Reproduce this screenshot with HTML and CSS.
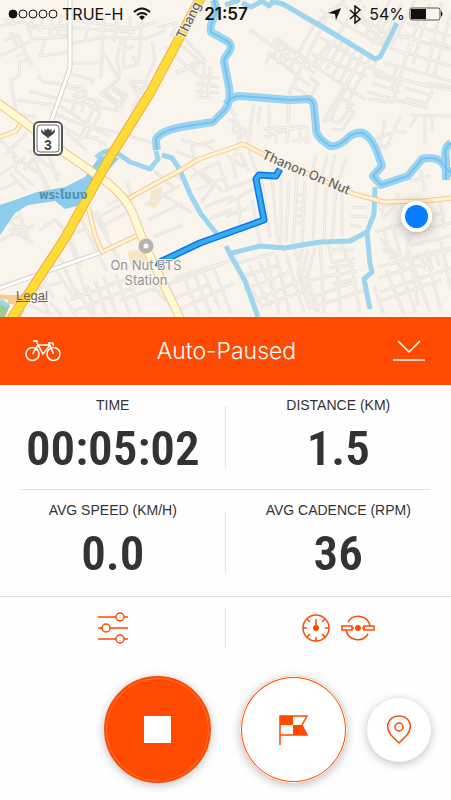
FILE: index.html
```
<!DOCTYPE html>
<html lang="en">
  <head>
    <meta charset="UTF-8" />
    <meta name="viewport" content="width=device-width, initial-scale=1.0" />
    <title>Ride Recording</title>
    <link rel="stylesheet" href="styles.css" />
  </head>
  <body>
    <section class="map">
      <svg class="map-canvas" viewBox="0 0 451 317" preserveAspectRatio="xMidYMid slice" role="img" aria-label="Map of the ride">
        <defs>
          <path id="streets" d="
            M0 26l20-4 22 5 28 3M4 40l14-5 8 19 6 12M10 32l9 17M0 56l18-8 12-7M16 57l9-5M22 62l8-5M27 24l5 15 37-2M34 14l-4 17M43 14l-3 18M53 15l-3 20M62 15l-5 22M28 29l40-4M42 39l28-5M45 40l-5 16 30-4M3 20h12M70 44l33-7 40 2 22-8M90 17l-5 22M104 12l-3 66M117 14l-3 28M130 16v22M143 13l-3 26M72 28l62 4M72 20l45 6M100 47l19 32-18 15 20 13 6-12-14-8M121 39l-4 20 3 18M122 50l12-4M125 40l-2 28 15-4 3-24M132 56l8 10M152 42l3 18-10 22-16-1 20 16 14-26M128 80l10 15 9-12
            M71 63h29M71 74l22 6-1 4M38 76l6 6 40 5M20 60l-1 16-8 4 5 34 20 3M17 100l43 6 34 22M29 91l30 8 60 12M64 86l22 6-4 20M72 95l30 7M78 90l-6 22M98 99l-12 26-9 20M88 104l12 8M50 112l30 12 35 8 42 12M57 124l24 13 18 1M66 132l20 18M101 113l-14 22 20 10M92 128l18 8M105 92l18 15M112 89l11 8-8 13M139 96l-7 14 5-3M165 46l24 22-12 5M167 50l32 26M173 38l26 23-24 12M180 34l25 26-14 10M205 60l-4 35M210 66l-2 32M195 76l24 2M196 84l23 3M195 91l24 2M197 97l15 1
            M157 27l20-4-6 14M132 29l24-7M107 25l30 4M181 140l18 5 16-5M190 139l4 17M202 142l12 8M176 151l20 8
            M0 140l18 18M5 155l22-22M12 150l4 20 18 16M24 170l18-22M0 175l25-18M0 190l20-9M26 190l-16-16M20 161l22 14 12 26M35 160l12 30M48 152l10 29M28 150l32 25M18 208l12 36M5 224l18-10M9 221l18 14M12 230l13-7M0 240l35-15M33 243l-24-14M40 230l15-11 15 18 12 30M66 230l20 64M61 239l24-10M55 245l22 52M47 257l28 42M39 272l15 27M35 290l26-8M80 216l27 56M92 211l26 47M98 217l34-18-5-17M104 225l27-14M96 210l12 26M107 205l22-10M148 220l34-17M153 237l30-12M140 193l34-18 14 8M145 205l35-20M153 170l20 17M160 193l32 20M192 167l21 20-12 16M200 170l23 22M190 177l28-15M197 190l29-13M205 207l28-11M209 219l23-9M218 161l10 30M153 286l25 29M184 276l15 39M193 271l18 43M202 269l18 40M213 266l18 47M159 288l79-30M174 278l58-18M168 301l40-16M179 310l55-27M87 285l8 31M76 289l16 26M95 280l11 34M104 277l12 36M116 274l14 41M130 283l11 30M50 302l12 14M64 297l12 19M29 305l20 9M40 294l11 21M70 300l60-22M71 312l66-26M120 300l37-12
            M250 30l38 27 27 16M270 43l20 17M277 38l43 32 46 30M295 58l20-34 30-24M331 9L290 90l-3 53M273 40l47 30M280 44l-8 15M285 46l-7 18M291 50l-8 14M298 54l-9 15M268 52l42 34M270 54l-4 10M310 77l8 7-9 15M300 76l-8 10 16 9M322 55l-13 12M329 43l-16 22M336 38l-18 31M342 42l-16 28M350 44l-18 33M357 47l-17 35M363 53l-32 65-8 4M370 58l-24 48M376 61l-4 9M318 69l25-42 18-27M312 54l55 23M320 37l59 36M355 69l-30 49 14 5 14-18-15-9M360 63l34 15 57 12M302 17l47 27M318 22l45 31M320 10l55 32 31 12M350 11l42 38M365 5l-10 22M378 5l-12 30M392 12l-20 32M340 3l45 30M390 0l-13 27M402 4l-22 42M415 0l-24 45M420 16l-14 43M430 3l-17 61M442 2l-15 71M451 12l-17 64M407 23l43 13M398 35l53 15M395 50l56 16M385 63l66 18M412 36l-19 66-25-3M396 68l-5 24M373 74l30 11M372 83l28 9M368 92l23 6M406 80l27 8M405 88l28 8M405 98l21 5 7-12M346 107l8 5-12 18-11-1M400 39l8-4 4 12M385 120l-6 28 12-4M375 139l20-7M400 117l-15 33M410 115l41 1M417 115l-7 12M425 117v28M432 116v15M396 132h11M392 99l36 9M429 83l22 4M430 40l21 7
            M229 105l11 25-4 27M228 119l18 11 5 27M236 113l-3 19 20 3M254 104l-6 39M260 106l-2 18M269 105v35M276 125v18M263 137l36-10M264 129l38-3M288 101v28l19-2v12l-15 2M300 128v15M307 129v15M244 131l-10 25
            M226 155l18 12M232 157l4 22M240 153l9 19M249 150l10 30M225 190l30-11M227 204l28-16M238 199l4 35M226 216l23-8M252 200l8 43M262 182l8 56M272 177l5 59 8 16M281 178v62M289 181l-3 61M297 174l-4 70M305 181l-3 62M316 182l-3 60M326 187l-2 55M336 191l-4 49M342 194v42M298 166l-2 29M298 195h9M297 202h9M297 209h9M296 216h9M295 223h9M312 174l4-19M322 177l5-22M330 178l5-24M338 182l8-23M350 216l18 1M350 225l12 2M352 207l15 1M320 243l4 70M328 242l4 20 22-3M341 242l6 18M329 250h26M329 268l26-4M332 276l25-5M333 284l24-5M337 262l3 50M350 259l10 53
            M302 249l-4 25 12 36M308 249l-6 27 14 36M315 247l-8 31 12 34M294 248l20 60M286 254l18 58M276 255l14 60M267 258l12 56M259 261l20 45M249 265l21 42M240 270l20 34M234 264l40-11M239 278l40-13M244 290l45-18M250 302l48-20M260 307l51-19M299 284l40-11M305 300l52-19M311 308l54-18
            M378 196l7 25M378 208l33-10M383 219l18-20M375 232l70-20M384 230l7 30M392 223l12 47M401 205l10 33-6 22M380 238l18 19M383 248l18 16M407 235l44-12M409 246l42-10M412 256l39-8M407 238l11 68M378 267l73-17M378 278l50-15M380 292l71-24M377 302l64-22M386 270l18 44M398 264l18 49M411 259l19 53M426 254l15 56M441 241l10 49M421 253l3 16M428 250l4 20M435 250l4 16M374 286l10 28M424 200l7 32M439 197l6 32M397 193l8 22M420 169l5 22M410 181l20-5M386 205l14-9" />
          <path id="water" d="M214 0l3 12q-8 12-6 20l14 8q9 4 4 12-5 6-5 10l4 20q5 20-5 30l-10 10-32 5q-20 4-25 12 0 6 1 11M226 104q6-8 14-8l50 4 19-1q5 3 5 8l2 20q-1 10 14 19 8 2 20-10 12-7 18 1 6 4 14 29l-9 10 8 9 27-9 14-17q14-3 20 4 8 11 14 12M451 143q-8 5-5 16v21" />
          <path id="yellow" d="M0 137l16-6 7-10M124 201l27-15 30-16 18-11 27-9 17-6 20 10 91 40 30 8 40-1 47-5M88 207l7 28 7 17 36-17" />
          <path id="route" d="M158 267l2-5 40-19 64-23-8-41 3-4 17 1 4-7" />
        </defs>
        <rect class="land" width="451" height="317" />
        <path class="park" d="M0 303l10 2-5 12H0z" />
        <path class="block" d="M151 191l11-4-1 14-7 7-5-2zM128 252l17-4 5 12-20 4z" />
        <use href="#streets" class="street-edge" />
        <use href="#streets" class="street" />

        <path class="lake" d="M100 156L85 177l-20 10-28 5-22 8-15 5v30l15-22 13-8 27-4 10 8 23-6 13-24 18-21z" />
        <path class="canal" d="M96 158q10-10 20-6l14 10 20 7 8-10-2-8M162 155l10 3 8 12 10 24 11 20 16 20M0 301l8 5M226 246l4 8 15 27 13 36M228 254l32-8 25 2 35-6 30-1 17-9 7-18 1-27M367 232l3 32 2 8-8 7 6 30M225 5l15-5M242 3l9 4 11-6 7 5 7-7" />
        <path class="canal" d="M270 1l13 3 43 25 49 30 5-2 17-34" />
        <use href="#water" class="river" />
        <use href="#water" class="river-core" />

        <path class="white-edge" d="M70 0v68L51 122M0 288l102-36" />
        <path class="white-road" d="M70 0v68L51 122M0 288l102-36" />
        <use href="#yellow" class="minor-edge" />
        <use href="#yellow" class="minor-road" />
        <path class="minor-edge" d="M0 297q18 1 27 0M8 301l13 2M26 298l-7 19" />
        <path class="main-edge" d="M-2 103l25 18 42 32 36 25q24 17 32 36l13 34 34 70" />
        <path class="main-road" d="M-2 103l25 18 42 32 36 25q24 17 32 36l13 34 34 70" />
        <path class="highway-edge" d="M201-3l-27 51-24 45-41 66-44 79-34 52-20 29" />
        <path class="highway" d="M201-3l-27 51-24 45-41 66-44 79-34 52-20 29" />

        <use href="#route" class="route-edge" />
        <use href="#route" class="route" />
        <circle class="station" cx="146" cy="246" r="5" />

        <g class="shield">
          <rect x="34" y="122" width="28" height="33" rx="5" class="shield-frame" />
          <rect x="37" y="125" width="22" height="27" rx="3" class="shield-inner" />
          <path d="M42 127q-1 4 3 5l-1-3 3 1 1-2 1 2 3-1-1 3q4-1 3-5l1 5-3 3-3 2-1 2-1-2-3-2-3-3z" />
          <text x="48" y="150">3</text>
        </g>
        <text class="road-label" transform="translate(184 40) rotate(-64)">Thang</text>
        <text class="road-label" transform="translate(261 158) rotate(23)">Thanon On Nut</text>
        <text class="water-label" x="39" y="199">พระโขนง</text>
        <text class="place-label" x="146" y="270">On Nut BTS</text>
        <text class="place-label" x="146" y="285">Station</text>
      </svg>

      <span class="position"></span>
      <a class="legal" href="#legal">Legal</a>

      <header class="status">
        <div class="carrier">
          <svg class="signal" width="50" height="12" viewBox="0 0 50 12" aria-hidden="true">
            <circle cx="5" cy="6" r="4" class="filled" />
            <circle cx="15" cy="6" r="4" />
            <circle cx="25" cy="6" r="4" />
            <circle cx="35" cy="6" r="4" />
            <circle cx="45" cy="6" r="4" />
          </svg>
          <span>TRUE-H</span>
          <svg class="wifi" width="18" height="14" viewBox="0 0 18 14" aria-hidden="true">
            <path d="M1 5q8-7 16 0M4 8q5-4 10 0" />
            <path class="filled" d="M6 10q3-3 6 0l-3 3z" />
          </svg>
        </div>
        <time>21:57</time>
        <div class="power">
          <svg width="13" height="13" viewBox="0 0 13 13" aria-hidden="true">
            <path d="M13 0L8 12 7 6 0 5z" />
          </svg>
          <svg class="bluetooth" width="12" height="19" viewBox="0 0 12 19" aria-hidden="true">
            <path d="M1 5l10 9-5 4V1l5 4-10 9" />
          </svg>
          <span>54%</span>
          <svg class="battery" width="35" height="14" viewBox="0 0 35 14" aria-hidden="true">
            <rect x="1" y="1" width="30" height="12" rx="2" class="case" />
            <path d="M2 2h15v10H2zM32 4q3 3 0 6z" />
          </svg>
        </div>
      </header>
    </section>

    <div class="banner">
      <button class="banner-btn" aria-label="Sport">
        <svg width="36" height="22" viewBox="0 0 36 22">
          <circle cx="7.5" cy="14" r="6.5" />
          <circle cx="28.5" cy="14" r="6.5" />
          <path d="M8 1h5M11 1l7 13 7-9M7.5 14L13 5l5 9M13 5h12M28.5 14L24 3h3q2 0 1 3" />
        </svg>
      </button>
      <h1>Auto-Paused</h1>
      <button class="banner-btn" aria-label="Minimize">
        <svg width="34" height="22" viewBox="0 0 34 22">
          <path d="M6 1l11 11L28 1M1 20h32" />
        </svg>
      </button>
    </div>

    <main>
      <div class="stats">
        <div class="stat">
          <h2>TIME</h2>
          <p>00:05:02</p>
        </div>
        <div class="stat">
          <h2>DISTANCE (KM)</h2>
          <p>1.5</p>
        </div>
      </div>
      <hr />
      <div class="stats">
        <div class="stat">
          <h2>AVG SPEED (KM/H)</h2>
          <p>0.0</p>
        </div>
        <div class="stat">
          <h2>AVG CADENCE (RPM)</h2>
          <p>36</p>
        </div>
      </div>

      <div class="tools">
        <button class="tool" aria-label="Settings">
          <svg width="30" height="32" viewBox="0 0 30 32">
            <path d="M0 5h18M26 5h4M0 16h5M12 16h18M0 27h18M26 27h4" />
            <circle cx="22" cy="5" r="4" />
            <circle cx="8" cy="16" r="4" />
            <circle cx="22" cy="27" r="4" />
          </svg>
        </button>
        <button class="tool" aria-label="Sensors">
          <svg width="28" height="28" viewBox="0 0 28 28">
            <circle cx="14" cy="14" r="13" />
            <path d="M14 14V5M1 14h4M23 14h4M14 23v4M5 5l3 3M23 5l-3 3M5 23l3-3M23 23l-3-3" />
            <circle cx="14" cy="14" r="3" class="dot" />
          </svg>
          <svg width="34" height="28" viewBox="0 0 34 28">
            <path d="M7 8a12 12 0 0 1 22 4M27 20a12 12 0 0 1-22-4M1 12h10v4H1zM23 12h10v4H23zM11 14h2M21 14h2" />
            <circle cx="17" cy="14" r="3" class="dot" />
          </svg>
        </button>
      </div>

      <div class="actions">
        <button class="round stop" aria-label="Stop"><span></span></button>
        <button class="round lap" aria-label="Lap">
          <svg width="30" height="32" viewBox="0 0 30 32">
            <path d="M1 31V2h27l-5 9 5 10H1" />
            <path class="dot" d="M1 2h13v9H1zM14 11h9l5 10H14z" />
          </svg>
        </button>
        <button class="round locate" aria-label="Show location">
          <svg width="24" height="29" viewBox="0 0 24 29">
            <path d="M12 28L4 20C-3 11 2 1 12 1s15 10 8 19z" />
            <circle cx="12" cy="12" r="4" />
          </svg>
        </button>
      </div>
    </main>
  </body>
</html>
```
FILE: styles.css
```
* {
  box-sizing: border-box;
}
body {
  margin: 0;
  min-height: 100vh;
  background-color: #fefefe;
  color: #333;
  font-family: "Liberation Sans", Arial, sans-serif;
}
button {
  padding: 0;
  border: none;
  background: none;
  cursor: pointer;
}
svg {
  display: block;
  fill: none;
}

/* Map */
.map {
  position: relative;
  overflow: hidden;
}
.map-canvas {
  width: 100%;
  height: 317px;
  stroke-linejoin: round;
}
.land {
  fill: #f9f4ec;
}
.park {
  fill: #9dcb91;
}
.block {
  fill: #f6e6c4;
}
.street-edge {
  stroke: #e7e4df;
  stroke-width: 3;
}
.street {
  stroke: #f7f3ed;
  stroke-width: 1;
}
.lake {
  fill: #8cccec;
}
.canal {
  stroke: #9dd5ef;
  stroke-width: 5;
}
.river {
  stroke: #9bd4f0;
  stroke-width: 8;
}
.river-core {
  stroke: #72c3f1;
  stroke-width: 2;
}
.white-edge {
  stroke: #d5d2cf;
  stroke-width: 5;
}
.white-road {
  stroke: #fff;
  stroke-width: 3;
}
.minor-edge {
  stroke: #f5cc94;
  stroke-width: 5;
}
.minor-road {
  stroke: #fff3d2;
  stroke-width: 3;
}
.main-edge {
  stroke: #f6c896;
  stroke-width: 9;
}
.main-road {
  stroke: #fffad2;
  stroke-width: 7;
}
.highway-edge {
  stroke: #f3ad4c;
  stroke-width: 10;
}
.highway {
  stroke: #ffdc35;
  stroke-width: 8;
}
.route-edge {
  stroke: #1470e8;
  stroke-width: 7;
}
.route {
  stroke: #2fafed;
  stroke-width: 4;
}
.station {
  fill: #fff;
  stroke: #b5b3b0;
  stroke-width: 5;
}
.shield {
  fill: #444;
}
.shield-frame {
  fill: #fff;
  stroke: #555;
  stroke-width: 2;
}
.shield-inner {
  fill: #fff;
  stroke: #666;
}
.shield text {
  font: bold 14px "Liberation Sans", sans-serif;
  text-anchor: middle;
}
.road-label,
.place-label,
.water-label {
  font-family: Inter, "Liberation Sans", sans-serif;
  font-size: 13px;
  stroke: #f9f4ec;
  stroke-width: 2;
  paint-order: stroke;
}
.road-label {
  font-weight: 500;
  fill: #666;
}
.place-label {
  fill: #969492;
  text-anchor: middle;
}
.water-label {
  font-family: "Noto Sans Thai", "Noto Sans", sans-serif;
  font-weight: bold;
  fill: #5292b0;
  stroke: none;
}
.position {
  position: absolute;
  top: 201px;
  right: 19px;
  width: 31px;
  height: 31px;
  border: 4px solid #fff;
  border-radius: 50%;
  background-color: #087bff;
  box-shadow: 0 2px 14px rgba(0, 0, 0, 0.3);
}
.legal {
  position: absolute;
  left: 16px;
  bottom: 13px;
  color: #66635f;
  font-size: 13px;
  line-height: 16px;
}

/* Phone status bar */
.status {
  position: absolute;
  top: 4px;
  left: 8px;
  right: 7px;
  display: grid;
  grid-template-columns: 1fr auto 1fr;
  align-items: center;
  height: 20px;
  color: #111;
  font-family: Inter, sans-serif;
  font-size: 16px;
}
.status time {
  font-size: 17px;
  font-weight: 600;
}
.carrier,
.power {
  display: flex;
  align-items: center;
  gap: 4px;
}
.power {
  justify-content: flex-end;
}
.power svg {
  fill: #111;
}
.signal,
.wifi {
  stroke: #111;
}
.wifi {
  margin-left: 6px;
  stroke-width: 2;
}
.wifi .filled {
  fill: #111;
  stroke: none;
}
.signal .filled {
  fill: #111;
}
.power .bluetooth {
  margin: 0 4px;
  fill: none;
  stroke: #111;
  stroke-width: 1.5;
}
.power .case {
  fill: #f9f4ec;
  stroke: #555;
}

/* Activity state */
.banner {
  display: flex;
  align-items: center;
  justify-content: space-between;
  height: 68px;
  padding: 0 25px;
  background-color: #ff4b02;
  color: #fff;
}
.banner h1 {
  margin: 0;
  font-family: Inter, sans-serif;
  font-size: 23px;
  font-weight: 300;
}
.banner-btn svg {
  stroke: #fff;
  stroke-width: 1.5;
}

/* Stats */
.stats {
  display: grid;
  grid-template-columns: 1fr 1fr;
  height: 104px;
}
.stat {
  position: relative;
  padding-top: 12px;
  text-align: center;
}
.stat h2 {
  margin: 0;
  font-size: 14px;
  font-weight: normal;
  line-height: 16px;
}
.stat p {
  margin: 8px 0 0;
  font-family: "Roboto Condensed", Roboto, sans-serif;
  font-size: 49px;
  font-weight: 600;
  line-height: 56px;
}
.stat + .stat::before,
.tool + .tool::before {
  content: "";
  position: absolute;
  left: -1px;
  top: 21px;
  height: 62px;
  border-left: 1px solid #e2e2e2;
}
hr {
  margin: 0 21px;
  border: 0;
  border-top: 1px solid #e2e2e2;
}

/* Tools */
.tools {
  display: grid;
  grid-template-columns: 1fr 1fr;
  height: 62px;
  margin-top: 2px;
  border-top: 1px solid #e2e2e2;
}
.tool {
  position: relative;
  display: flex;
  align-items: center;
  justify-content: center;
  gap: 11px;
}
.tool + .tool::before {
  top: 10px;
  height: 41px;
}
.tool svg,
.round svg {
  stroke: #ff4b02;
  stroke-width: 1.5;
}
.tool .dot,
.round .dot {
  fill: #ff4b02;
  stroke: none;
}

/* Record controls */
.actions {
  display: flex;
  align-items: center;
  justify-content: flex-end;
  padding: 18px 20px;
}
.round {
  display: flex;
  align-items: center;
  justify-content: center;
  width: 107px;
  height: 107px;
  border-radius: 50%;
  background-color: #fff;
  box-shadow: 0 2px 10px rgba(0, 0, 0, 0.25);
}
.stop {
  border: 2px solid #ff4b02;
  background-color: #ff4b02;
  box-shadow: inset 0 0 0 1px #ff6e30, 0 2px 10px rgba(0, 0, 0, 0.25);
}
.stop span {
  width: 27px;
  height: 27px;
  background-color: #fff;
}
.lap {
  margin-left: 29px;
  box-shadow: inset 0 0 0 1px #fff, inset 0 0 0 2px #ff4b02,
    0 2px 10px rgba(0, 0, 0, 0.25);
}
.locate {
  width: 64px;
  height: 64px;
  margin-left: 20px;
}
```
